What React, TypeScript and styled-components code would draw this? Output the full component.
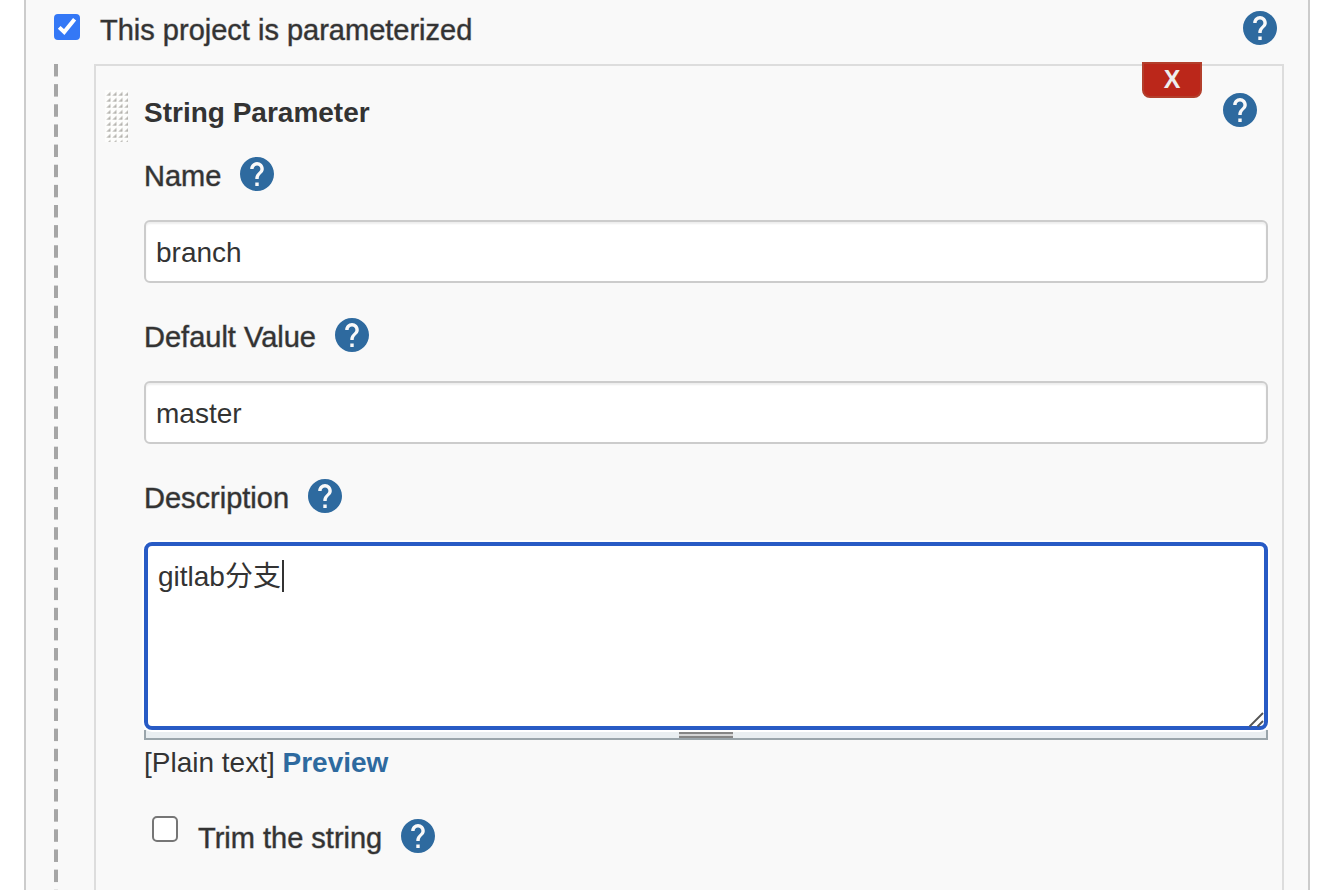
import React, { useState } from "react";
import styled, { createGlobalStyle, css } from "styled-components";

const GlobalStyle = createGlobalStyle`
  *, *::before, *::after { box-sizing: border-box; }
  body {
    margin: 0;
    background: #fff;
    color: #333;
    font-family: "Liberation Sans", "Noto Sans CJK SC", sans-serif;
    font-size: 28px;
    line-height: 32px;
  }
`;

const mediumWeight = css`
  -webkit-text-stroke: 1px rgba(51, 51, 51, 0.45);
`;

const Page = styled.main`
  min-height: 100vh;
  margin: 0 34px 0 24px;
  padding: 11px 24px 0 28px;
  display: flex;
  flex-direction: column;
  background: #f9f9f9;
  border: solid #ccc;
  border-width: 0 2px;
`;

const Row = styled.div<{ $endGap?: number }>`
  display: flex;
  align-items: flex-start;
  height: 34px;
  padding-right: ${(p) => p.$endGap ?? 0}px;
`;

const Caption = styled.label`
  padding-top: 3px;
  font-size: 29px;
  ${mediumWeight}
`;

const Title = styled.h2`
  margin: 0;
  padding-top: 4px;
  font-size: 28px;
  font-weight: 700;
`;

const HelpButton = styled.button<{ $end?: boolean }>`
  flex: none;
  display: block;
  width: 34px;
  height: 34px;
  margin: 0 0 0 ${(p) => (p.$end ? "auto" : "19px")};
  padding: 0;
  border: 0;
  border-radius: 50%;
  background: none;
  color: #2e6a9f;
  cursor: pointer;

  svg { display: block; }
`;

const CheckFrame = styled.span<{ $top?: number }>`
  position: relative;
  flex: none;
  width: 26px;
  height: 26px;
  margin: ${(p) => p.$top ?? 0}px 20px 0 0;

  svg {
    position: absolute;
    inset: 0;
    pointer-events: none;
  }
`;

const CheckInput = styled.input`
  appearance: none;
  display: block;
  width: 26px;
  height: 26px;
  margin: 0;
  border: 2px solid #767676;
  border-radius: 5px;
  background: #fff;

  &:checked {
    border-color: #3478f6;
    border-radius: 4px;
    background: #3478f6;
  }
`;

const Nested = styled.div`
  flex: 1;
  display: flex;
  margin-top: 19px;
  padding-left: 40px;
  background: linear-gradient(#a6a6a6 0 60%, transparent 60%) left top / 4px 20px;
  background-repeat: no-repeat round;
`;

const Card = styled.section`
  position: relative;
  flex: 1;
  min-width: 0;
  padding: 27px 14px 0 48px;
  border: 2px solid #ddd;
  border-bottom: 0;
`;

const DeleteButton = styled.button`
  position: absolute;
  top: -4px;
  right: 80px;
  width: 60px;
  height: 36px;
  padding: 0 0 2px;
  border: 2px solid #b33f2c;
  border-radius: 0 0 8px 8px;
  background: #bb271a;
  color: #eee;
  font: 700 25px/30px "Liberation Sans", sans-serif;
`;

const DragHandle = styled.span`
  position: absolute;
  top: 24px;
  left: 9px;
  width: 23px;
  height: 52px;
  cursor: move;

  svg { display: block; }
`;

const Fields = styled.div`
  margin-top: 30px;
`;

const Field = styled.div`
  margin-bottom: 35px;
`;

const TextInput = styled.input`
  display: block;
  width: 100%;
  height: 63px;
  margin-top: 29px;
  padding: 2px 10px 0;
  border: 2px solid #ccc;
  border-radius: 6px;
  background: #fff;
  box-shadow: inset 0 2px 2px rgba(0, 0, 0, 0.07);
  color: inherit;
  font: inherit;
  outline: 0;
`;

const AreaFrame = styled.div`
  position: relative;
  margin-top: 29px;
`;

const TextArea = styled.textarea`
  position: relative;
  display: block;
  width: 100%;
  height: 188px;
  padding: 15px 10px;
  border: 4px solid #285bc5;
  border-radius: 8px;
  background: #fff;
  box-shadow: 0 0 0 2px #fff;
  color: inherit;
  font: inherit;
  resize: none;
  outline: 0;
  caret-color: transparent;
`;

const Caret = styled.span`
  position: absolute;
  top: 18px;
  left: 138px;
  width: 2px;
  height: 32px;
  background: #333;
`;

const Resizer = styled.svg`
  position: absolute;
  right: 4px;
  bottom: 2px;
`;

const Grip = styled.div`
  height: 10px;
  display: flex;
  justify-content: center;
  border: 2px solid #9aa5ab;
  border-top: 0;
  background: #e9eef1;

  &::after {
    content: "";
    width: 54px;
    height: 6px;
    margin-top: 2px;
    border: solid #868686;
    border-width: 2px 0;
    background: #d6d6d6;
  }
`;

const Format = styled.p`
  margin: 7px 0 37px;
`;

const Preview = styled.a`
  color: #2e6a9f;
  font-weight: 700;
  text-decoration: none;
`;

const TrimRow = styled(Row)`
  padding-left: 8px;
`;

const TrimCaption = styled(Caption)`
  padding-top: 6px;
`;

const TrimHelp = styled.span`
  padding-top: 3px;
`;

function Help({ topic, end }: { topic: string; end?: boolean }) {
  return (
    <HelpButton type="button" $end={end} aria-label={`Help for ${topic}`}>
      <svg width="34" height="34" viewBox="2 2 20 20" fill="currentColor" aria-hidden="true">
        <path d="M12 2C6.48 2 2 6.48 2 12s4.48 10 10 10 10-4.48 10-10S17.52 2 12 2zm1 17h-2v-2h2v2zm2.07-7.75l-.9.92C13.45 12.9 13 13.5 13 15h-2v-.5c0-1.1.45-2.1 1.17-2.83l1.24-1.26c.37-.36.59-.86.59-1.41 0-1.1-.9-2-2-2s-2 .9-2 2H8c0-2.21 1.79-4 4-4s4 1.79 4 4c0 .88-.36 1.68-.93 2.25z" />
      </svg>
    </HelpButton>
  );
}

function Checkbox({ id, initial, top }: { id: string; initial: boolean; top?: number }) {
  const [checked, setChecked] = useState(initial);
  return (
    <CheckFrame $top={top}>
      <CheckInput id={id} type="checkbox" checked={checked} onChange={(e) => setChecked(e.target.checked)} />
      {checked && (
        <svg width="26" height="26" viewBox="0 0 26 26" fill="none" stroke="#fff" strokeWidth="4" aria-hidden="true">
          <path d="M5.2 13.4l5 4.6L20.6 5.2" />
        </svg>
      )}
    </CheckFrame>
  );
}

function Dots() {
  return (
    <DragHandle>
      <svg width="23" height="52" aria-hidden="true">
        <defs>
          <pattern id="dots" width="6" height="6" patternUnits="userSpaceOnUse">
            <rect width="6" height="6" fill="#fdfdfc" />
            <path d="M5.5 1.5v4.2H1.2z" fill="#c6c5c1" />
            <path d="M5.2 3.2v2H3.2z" fill="#b2b0ac" />
          </pattern>
        </defs>
        <rect width="23" height="52" fill="url(#dots)" />
      </svg>
    </DragHandle>
  );
}

function FieldList() {
  return (
    <Fields>
      <Field>
        <Row>
          <Caption htmlFor="name">Name</Caption>
          <Help topic="Name" />
        </Row>
        <TextInput id="name" defaultValue="branch" />
      </Field>
      <Field>
        <Row>
          <Caption htmlFor="default">Default Value</Caption>
          <Help topic="Default Value" />
        </Row>
        <TextInput id="default" defaultValue="master" />
      </Field>
      <Row>
        <Caption htmlFor="description">Description</Caption>
        <Help topic="Description" />
      </Row>
      <AreaFrame>
        <TextArea id="description" defaultValue="gitlab分支" spellCheck={false} />
        <Caret />
        <Resizer width="16" height="16" viewBox="0 0 16 16" fill="none" stroke="#555" strokeWidth="1.8" aria-hidden="true">
          <path d="M1.5 14.5L15 1M9.5 14.5L15 9" />
        </Resizer>
      </AreaFrame>
      <Grip />
      <Format>
        [Plain text] <Preview href="#preview">Preview</Preview>
      </Format>
      <TrimRow>
        <Checkbox id="trim" initial={false} />
        <TrimCaption htmlFor="trim">Trim the string</TrimCaption>
        <TrimHelp>
          <Help topic="Trim the string" />
        </TrimHelp>
      </TrimRow>
    </Fields>
  );
}

export default function App() {
  return (
    <>
      <GlobalStyle />
      <Page>
        <Row $endGap={7}>
          <Checkbox id="parameterized" initial top={3} />
          <Caption htmlFor="parameterized">This project is parameterized</Caption>
          <Help topic="This project is parameterized" end />
        </Row>
        <Nested>
          <Card>
            <Dots />
            <DeleteButton type="button" aria-label="Delete parameter">X</DeleteButton>
            <Row $endGap={11}>
              <Title>String Parameter</Title>
              <Help topic="String Parameter" end />
            </Row>
            <FieldList />
          </Card>
        </Nested>
      </Page>
    </>
  );
}
